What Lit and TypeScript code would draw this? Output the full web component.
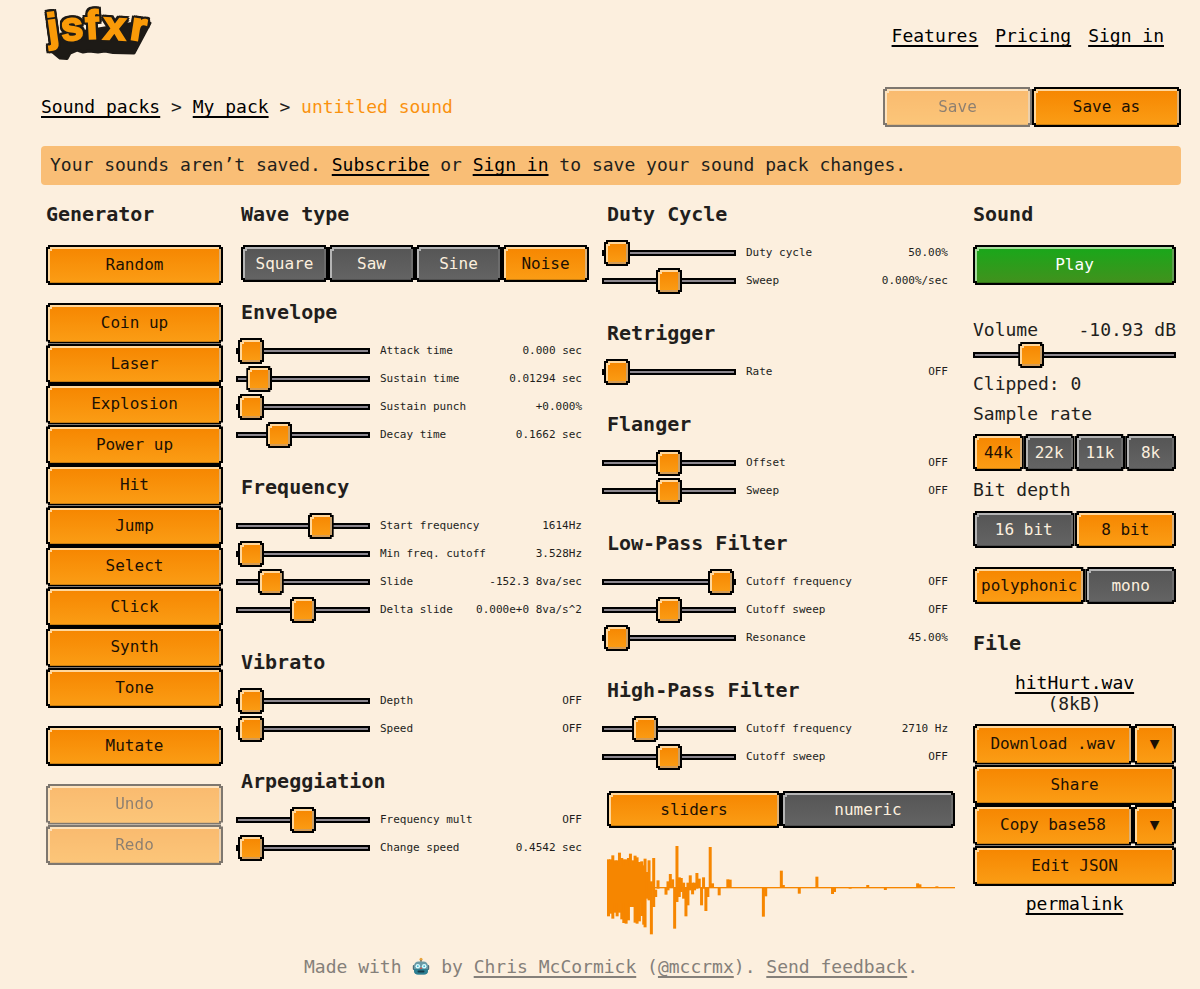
import { LitElement, html, svg, css } from "lit";
import { customElement, state } from "lit/decorators.js";
import { classMap } from "lit/directives/class-map.js";

interface Param {
  label: string;
  value: string;
  pos: number;
}
interface Section {
  title: string;
  params: Param[];
}

const p = (label: string, pos: number, value: string): Param => ({ label, pos, value });

const LEFT: Section[] = [
  {
    title: "Envelope",
    params: [
      p("Attack time", 0, "0.000 sec"),
      p("Sustain time", 8, "0.01294 sec"),
      p("Sustain punch", 0, "+0.000%"),
      p("Decay time", 27, "0.1662 sec"),
    ],
  },
  {
    title: "Frequency",
    params: [
      p("Start frequency", 67, "1614Hz"),
      p("Min freq. cutoff", 0, "3.528Hz"),
      p("Slide", 19, "-152.3 8va/sec"),
      p("Delta slide", 50, "0.000e+0 8va/s^2"),
    ],
  },
  { title: "Vibrato", params: [p("Depth", 0, "OFF"), p("Speed", 0, "OFF")] },
  { title: "Arpeggiation", params: [p("Frequency mult", 50, "OFF"), p("Change speed", 0, "0.4542 sec")] },
];

const RIGHT: Section[] = [
  { title: "Duty Cycle", params: [p("Duty cycle", 0, "50.00%"), p("Sweep", 50, "0.000%/sec")] },
  { title: "Retrigger", params: [p("Rate", 0, "OFF")] },
  { title: "Flanger", params: [p("Offset", 50, "OFF"), p("Sweep", 50, "OFF")] },
  {
    title: "Low-Pass Filter",
    params: [p("Cutoff frequency", 100, "OFF"), p("Cutoff sweep", 50, "OFF"), p("Resonance", 0, "45.00%")],
  },
  { title: "High-Pass Filter", params: [p("Cutoff frequency", 27, "2710 Hz"), p("Cutoff sweep", 50, "OFF")] },
];

const GENERATORS = ["Coin up", "Laser", "Explosion", "Power up", "Hit", "Jump", "Select", "Click", "Synth", "Tone"];

// Each bar of the waveform: x, top, bottom, in thirds of a pixel.
const WAVE: number[][] = [
  [3, 40, 211], [9, 40, 203], [16, 28, 218], [23, 43, 200], [29, 43, 211], [36, 20, 200], [43, 36, 220],
  [49, 40, 231], [56, 40, 233], [63, 36, 223], [69, 23, 183], [76, 43, 183], [83, 29, 230], [89, 34, 233],
  [96, 48, 226], [103, 46, 210], [109, 58, 236], [113, 38, 244], [119, 78, 158], [125, 43, 163],
  [132, 106, 265], [139, 36, 183], [145, 131, 153], [152, 103, 128], [176, 125, 146], [182, 106, 133],
  [189, 84, 125], [196, 100, 125], [202, 125, 248], [209, 0, 168], [216, 94, 153], [222, 96, 138],
  [229, 110, 158], [236, 123, 211], [242, 110, 178], [249, 88, 133], [256, 110, 145], [262, 110, 133],
  [269, 81, 128], [276, 98, 125], [283, 125, 178], [289, 94, 128], [296, 123, 195], [302, 125, 153],
  [309, 3, 125], [316, 112, 125], [336, 125, 148], [362, 100, 125], [369, 101, 125], [469, 125, 212],
  [476, 125, 151], [523, 74, 125], [529, 117, 125], [577, 125, 143], [630, 92, 125], [677, 125, 144],
  [683, 125, 138], [730, 125, 128], [783, 117, 125], [836, 125, 132], [933, 112, 125], [940, 115, 125],
  [991, 121, 125],
];

@customElement("app-root")
export class AppRoot extends LitElement {
  @state() private wave = "Noise";
  @state() private rate = "44k";
  @state() private depth = "8 bit";
  @state() private voice = "polyphonic";
  @state() private view = "sliders";

  static styles = css`
    :host {
      display: block;
      min-height: 100vh;
      box-sizing: border-box;
      padding: 0 19px 10px 41px;
      background: #fcefde;
      color: #221e1c;
      font-family: "DejaVu Sans Mono", "Liberation Mono", monospace;
      font-size: 18px;
      line-height: 24px;
    }
    * { box-sizing: border-box; }
    a { color: #000; text-decoration: underline; text-underline-offset: 3px; text-decoration-thickness: 2px; text-decoration-skip-ink: none; }
    h2 { margin: 0; font-size: 20px; line-height: 24px; font-weight: 700; }
    p { margin: 0; }

    .top { display: flex; justify-content: space-between; align-items: center; padding: 8px 17px 8px 4px; }
    .logo { display: block; overflow: visible; }
    .logo-text {
      font-family: "Liberation Sans", Arial, sans-serif;
      font-weight: 700;
      fill: #f99a08;
      stroke: #f99a08;
      stroke-width: 2px;
      filter: drop-shadow(2px 0 0 #1d1a16) drop-shadow(-2px 0 0 #1d1a16) drop-shadow(0 2px 0 #1d1a16) drop-shadow(0 -2px 0 #1d1a16);
    }
    .logo-back { fill: #1d1a16; stroke: #1d1a16; stroke-linejoin: round; }
    nav { display: flex; gap: 17px; padding-top: 2px; }

    .crumbs { display: flex; justify-content: space-between; align-items: center; margin-top: 18px; flex-wrap: wrap; }
    .current { color: #fa920f; }
    .save { display: flex; width: 298px; }
    .alert { margin: 19px 0 17px; padding: 7px 9px 8px; border-radius: 4px; background: #f9be76; }

    .board {
      display: grid;
      grid-template-columns: minmax(0, 177fr) minmax(0, 348fr) minmax(0, 348fr) minmax(0, 203fr);
      gap: 18px;
      padding: 0 5px;
      align-items: start;
    }

    button {
      flex: 1 1 0;
      width: 100%;
      min-height: 40px;
      margin: 0;
      padding: 0 6px;
      border: 2px solid #000;
      font: inherit;
      font-size: 16px;
      line-height: 20px;
      color: #1c1004;
      white-space: nowrap;
      cursor: pointer;
      --glow: #ffd79c;
      --side: #dbb17a;
      --face: linear-gradient(#f68600, #fb9d15);
      clip-path: polygon(2px 0, calc(100% - 2px) 0, calc(100% - 2px) 2px, 100% 2px, 100% calc(100% - 2px), calc(100% - 2px) calc(100% - 2px), calc(100% - 2px) 100%, 2px 100%, 2px calc(100% - 2px), 0 calc(100% - 2px), 0 2px, 2px 2px);
      background:
        linear-gradient(#000, #000) 0 0 / 2px 2px no-repeat padding-box,
        linear-gradient(#000, #000) 100% 0 / 2px 2px no-repeat padding-box,
        linear-gradient(#000, #000) 0 100% / 2px 2px no-repeat padding-box,
        linear-gradient(#000, #000) 100% 100% / 2px 2px no-repeat padding-box,
        linear-gradient(var(--glow), var(--glow)) 2px 2px / 2px 2px no-repeat padding-box,
        linear-gradient(var(--glow), var(--glow)) 0 0 / 100% 2px no-repeat padding-box,
        linear-gradient(var(--glow), var(--glow)) 0 0 / 2px 100% no-repeat padding-box,
        linear-gradient(var(--side), var(--side)) 100% 0 / 2px 100% no-repeat padding-box,
        linear-gradient(#0003, #0003) 0 100% / 100% 1px no-repeat padding-box,
        var(--face) padding-box;
    }
    button:disabled { opacity: 0.5; cursor: default; }
    .dark { color: #fcefde; --glow: #b4b4b4; --side: #6c6c6c; --face: linear-gradient(#555, #646464); }
    .play { color: #fff; --glow: #a6dc9c; --side: #5f9e50; --face: linear-gradient(#18a81a, #42911d); }
    .seg { display: flex; }
    .seg button { min-height: 37px; }
    .stack { display: grid; grid-auto-rows: 1fr; }
    .split { display: flex; }
    .split .more { flex: 0 0 43px; }

    .generator { display: grid; gap: 18px; }
    .generator h2 { margin-bottom: 1px; }
    .ten { min-height: 405px; }
    .two { min-height: 81px; }
    .four { min-height: 162px; margin-top: 10px; }

    .wave-type { margin: 19px 0 18px; }
    section + section { margin-top: 26px; }
    .rows { margin-top: 13px; }
    .row { display: flex; align-items: center; height: 28px; gap: 10px; margin-left: -5px; padding-right: 7px; font-size: 11px; line-height: 14px; }
    .row input { flex: 0 0 134px; }
    .row label { flex: 1; white-space: nowrap; }
    .row output { white-space: nowrap; }

    input[type="range"] {
      appearance: none;
      width: 100%;
      min-width: 0;
      height: 26px;
      margin: 0;
      padding: 0 2px;
      background:
        linear-gradient(#8b868e, #8b868e) 2px 50% / calc(100% - 4px) 2px no-repeat,
        linear-gradient(#000, #000) 0 50% / 100% 6px no-repeat;
    }
    input[type="range"]::-webkit-slider-thumb {
      appearance: none;
      width: 26px;
      height: 26px;
      border: 2px solid #000;
      clip-path: polygon(2px 0, 24px 0, 24px 2px, 26px 2px, 26px 24px, 24px 24px, 24px 26px, 2px 26px, 2px 24px, 0 24px, 0 2px, 2px 2px);
      background:
        linear-gradient(#000, #000) 0 0 / 2px 2px no-repeat padding-box,
        linear-gradient(#000, #000) 100% 0 / 2px 2px no-repeat padding-box,
        linear-gradient(#000, #000) 0 100% / 2px 2px no-repeat padding-box,
        linear-gradient(#000, #000) 100% 100% / 2px 2px no-repeat padding-box,
        linear-gradient(#ffd79c, #ffd79c) 2px 2px / 2px 2px no-repeat padding-box,
        linear-gradient(#ffd79c, #ffd79c) 0 0 / 100% 2px no-repeat padding-box,
        linear-gradient(#ffd79c, #ffd79c) 0 0 / 2px 100% no-repeat padding-box,
        linear-gradient(#c9a06a, #c9a06a) 100% 0 / 2px 100% no-repeat padding-box,
        linear-gradient(#d39b55, #d39b55) 0 100% / 100% 2px no-repeat padding-box,
        linear-gradient(#f68600, #fb9d15) padding-box;
    }

    .view { margin: 20px 0 18px; }
    .scope { display: block; width: 100%; height: 90px; fill: #f68600; }

    .sound-play { display: flex; margin: 19px 0 33px; }
    .volume { display: flex; justify-content: space-between; }
    .volume-range { display: block; }
    .line { margin: 4px 0 6px; }
    .rates { margin: 8px 0 7px; }
    .depths { margin: 9px 0 19px; }
    .voices { margin-bottom: 27px; }
    .file { margin-top: 17px; text-align: center; line-height: 21px; }
    .permalink { margin-top: 6px; text-align: center; }

    footer { margin-top: 19px; text-align: center; color: #85807a; }
    footer a { color: inherit; }
    .robot { vertical-align: -2px; }
  `;

  private button(label: string, cls = "") {
    return html`<button type="button" class=${cls}>${label}</button>`;
  }

  private segments(options: string[], current: string, pick: (v: string) => void, cls: string, name: string) {
    return html`<div class="seg ${cls}" role="group" aria-label=${name}>
      ${options.map(
        (o) => html`<button
          type="button"
          class=${classMap({ dark: o !== current })}
          aria-pressed=${o === current ? "true" : "false"}
          @click=${() => pick(o)}
        >${o}</button>`
      )}
    </div>`;
  }

  private section(s: Section) {
    return html`<section>
      <h2>${s.title}</h2>
      <div class="rows">
        ${s.params.map((q) => {
          const id = `${s.title}-${q.label}`.toLowerCase().replace(/[^a-z]+/g, "-");
          return html`<div class="row">
            <input type="range" id=${id} min="0" max="100" .value=${String(q.pos)} />
            <label for=${id}>${q.label}</label>
            <output for=${id}>${q.value}</output>
          </div>`;
        })}
      </div>
    </section>`;
  }

  private logo() {
    return html`<svg class="logo" width="108" height="53" viewBox="44 8 108 53" role="img" aria-label="jsfxr">
      <path class="logo-back" stroke-width="3" d="M47 48 L59 58 L66 58.5 L69 53 L76 50 L82 52 L88 51 L97 52 L104 51 L112 52.5 L133 53 L149 23 L140 22 L55 36 Z"></path>
      <text class="logo-text" font-size="40" x="48 61 85 102 128" y="42 41 39 39 39" rotate="-8 -5 -3 3 9">jsfxr</text>
    </svg>`;
  }

  private robot() {
    return html`<svg class="robot" width="18" height="18" viewBox="0 0 18 18" aria-hidden="true">
      <circle cx="9" cy="2.2" r="1.5" fill="#e8a33c"></circle>
      <rect x="8.3" y="3" width="1.4" height="2.5" fill="#7a6a55"></rect>
      <rect x="0.8" y="8" width="2" height="5" rx="1" fill="#4b6c78"></rect>
      <rect x="15.2" y="8" width="2" height="5" rx="1" fill="#4b6c78"></rect>
      <path d="M2 9a4.500 4.500 0 0 1 4.500-4.500h5A4.500 4.500 0 0 1 16 9v4.500a4 4 0 0 1-4 4H6a4 4 0 0 1-4-4z" fill="#6a9aa6"></path>
      <path d="M2 12h14v1.500a4 4 0 0 1-4 4H6a4 4 0 0 1-4-4z" fill="#2d7f92"></path>
      <circle cx="5.8" cy="9.2" r="2.3" fill="#d8fbff"></circle>
      <circle cx="12.2" cy="9.2" r="2.3" fill="#d8fbff"></circle>
      <circle cx="5.8" cy="9.2" r="0.9" fill="#47b8cf"></circle>
      <circle cx="12.2" cy="9.2" r="0.9" fill="#47b8cf"></circle>
      <path d="M9 10l1.200 2H7.800z" fill="#d0524a"></path>
      <rect x="5.5" y="13.5" width="7" height="2" rx="1" fill="#173c4a"></rect>
    </svg>`;
  }

  render() {
    return html`
      <header class="top">
        ${this.logo()}
        <nav>
          <a href="#features">Features</a>
          <a href="#pricing">Pricing</a>
          <a href="#signin">Sign in</a>
        </nav>
      </header>

      <div class="crumbs">
        <div><a href="#packs">Sound packs</a> &gt; <a href="#pack">My pack</a> &gt; <span class="current">untitled sound</span></div>
        <div class="save">
          <button type="button" disabled>Save</button>
          ${this.button("Save as")}
        </div>
      </div>

      <div class="alert">Your sounds aren’t saved. <a href="#subscribe">Subscribe</a> or <a href="#signin">Sign in</a> to save your sound pack changes.</div>

      <main class="board">
        <div class="generator">
          <h2>Generator</h2>
          ${this.button("Random")}
          <div class="stack ten">${GENERATORS.map((g) => this.button(g))}</div>
          ${this.button("Mutate")}
          <div class="stack two">
            <button type="button" disabled>Undo</button>
            <button type="button" disabled>Redo</button>
          </div>
        </div>

        <div>
          <h2>Wave type</h2>
          ${this.segments(["Square", "Saw", "Sine", "Noise"], this.wave, (v) => (this.wave = v), "wave-type", "Wave type")}
          ${LEFT.map((s) => this.section(s))}
        </div>

        <div>
          ${RIGHT.map((s) => this.section(s))}
          ${this.segments(["sliders", "numeric"], this.view, (v) => (this.view = v), "view", "Input style")}
          <svg class="scope" viewBox="0 0 1047 270" preserveAspectRatio="none" role="img" aria-label="Waveform">
            <rect x="0" y="123" width="1047" height="4"></rect>
            ${WAVE.map(([x, a, b]) => svg`<rect x=${x - 3} y=${a} width="9" height=${b - a}></rect>`)}
            <rect x="0" y="60" width="116" height="110"></rect>
          </svg>
        </div>

        <div>
          <h2>Sound</h2>
          <div class="sound-play">${this.button("Play", "play")}</div>
          <div class="volume"><label for="volume">Volume</label><output for="volume">-10.93 dB</output></div>
          <input class="volume-range" type="range" id="volume" min="0" max="100" .value=${"25"} />
          <p class="line">Clipped: 0</p>
          <p>Sample rate</p>
          ${this.segments(["44k", "22k", "11k", "8k"], this.rate, (v) => (this.rate = v), "rates", "Sample rate")}
          <p>Bit depth</p>
          ${this.segments(["16 bit", "8 bit"], this.depth, (v) => (this.depth = v), "depths", "Bit depth")}
          ${this.segments(["polyphonic", "mono"], this.voice, (v) => (this.voice = v), "voices", "Voices")}
          <h2>File</h2>
          <div class="file"><a href="#wav">hitHurt.wav</a><br />(8kB)</div>
          <div class="stack four">
            <div class="split">${this.button("Download .wav")}<button type="button" class="more" aria-label="More download formats">▼</button></div>
            ${this.button("Share")}
            <div class="split">${this.button("Copy base58")}<button type="button" class="more" aria-label="More copy formats">▼</button></div>
            ${this.button("Edit JSON")}
          </div>
          <p class="permalink"><a href="#permalink">permalink</a></p>
        </div>
      </main>

      <footer>Made with ${this.robot()} by <a href="#chris">Chris McCormick</a> (<a href="#mccrmx">@mccrmx</a>). <a href="#feedback">Send feedback</a>.</footer>
    `;
  }
}
